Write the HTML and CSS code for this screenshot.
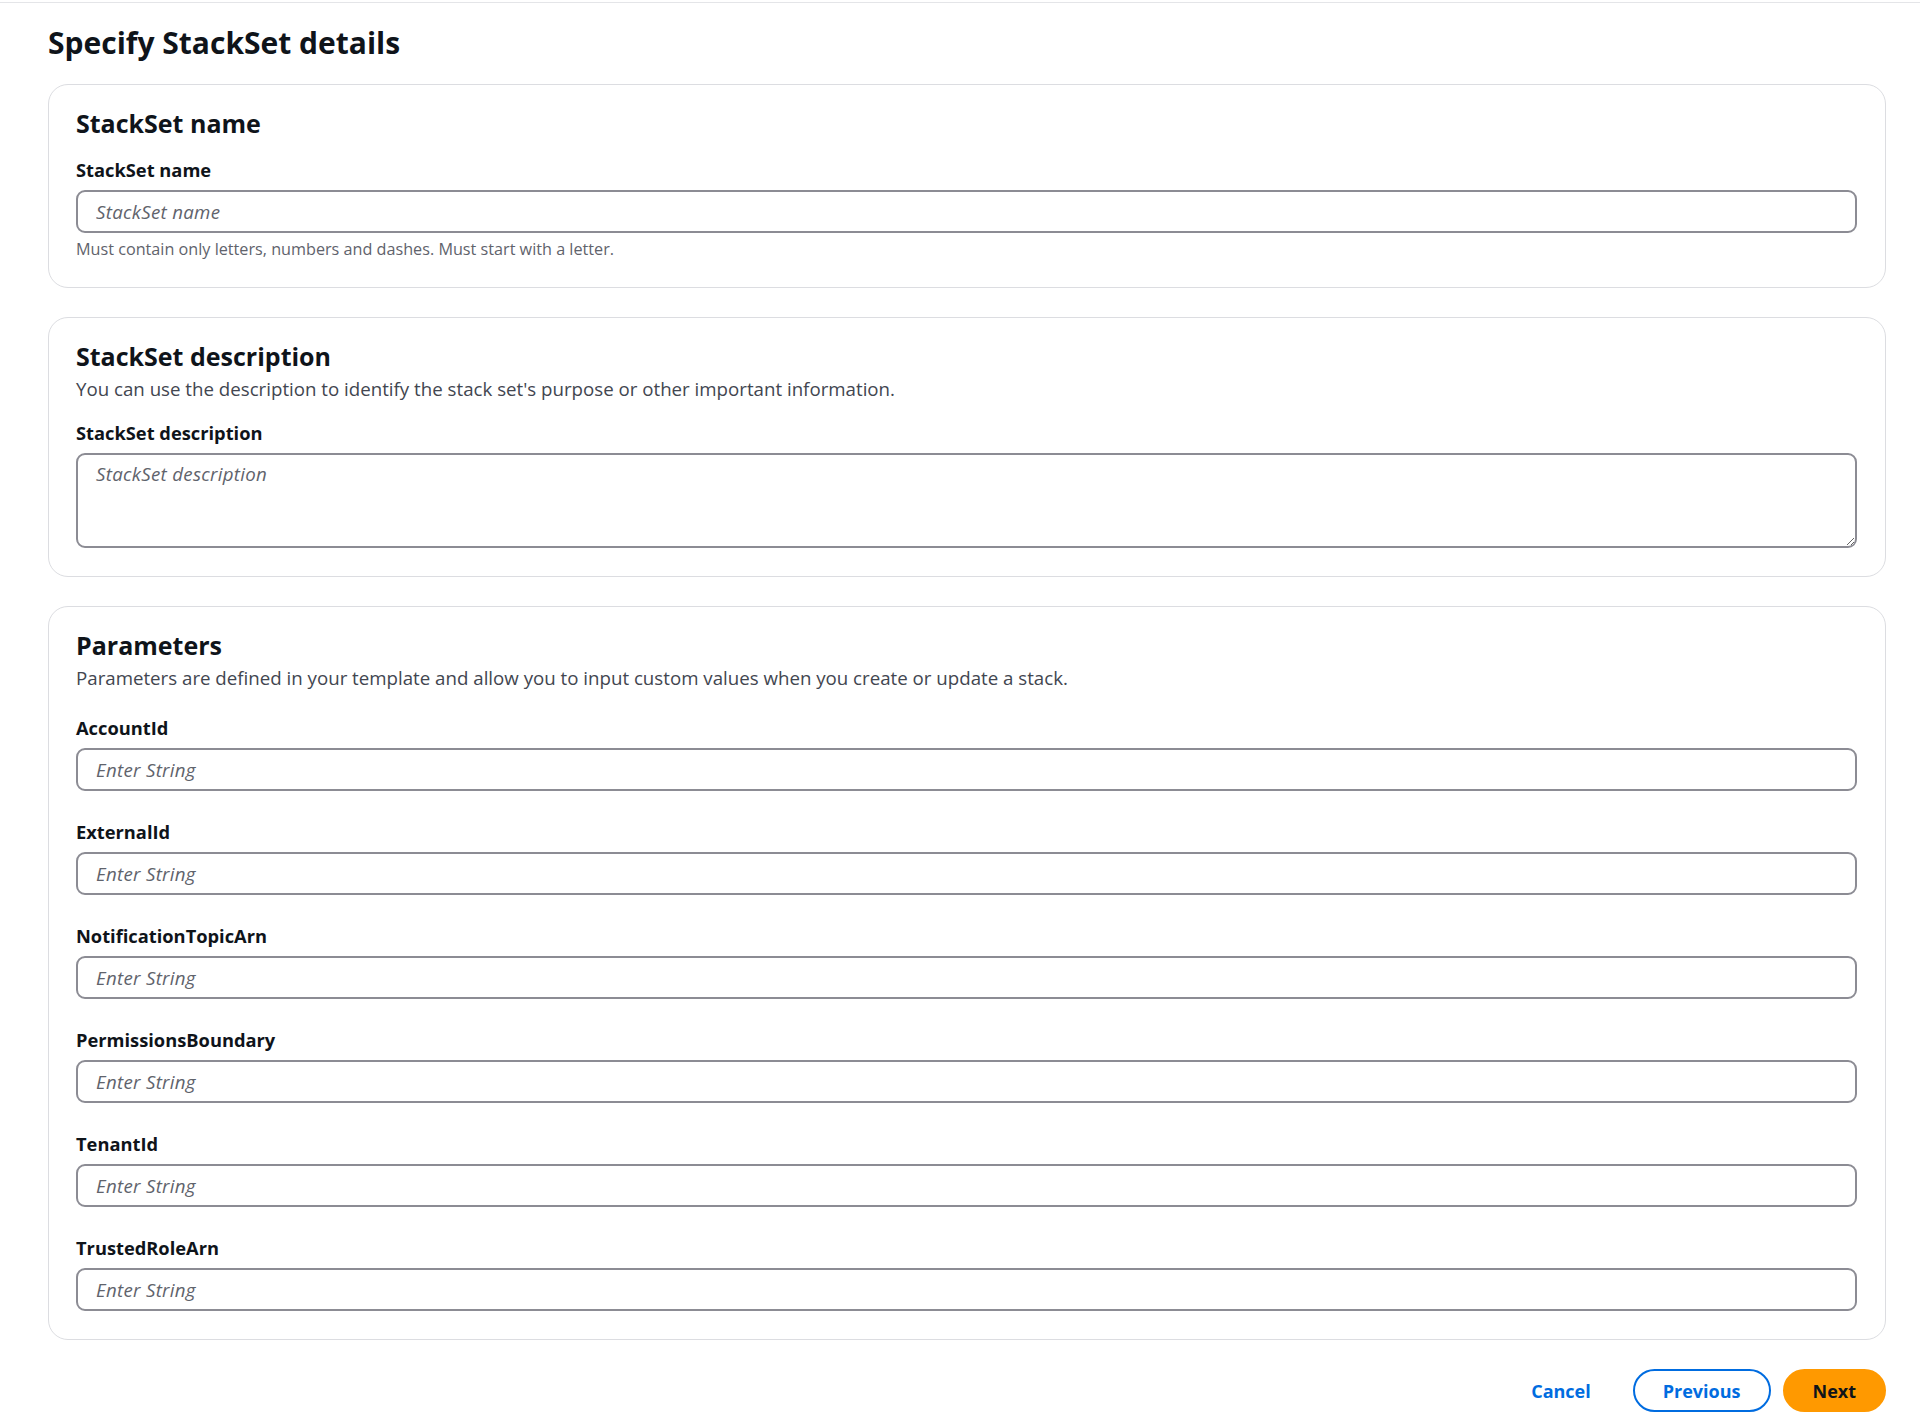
FILE: index.html
```html
<!DOCTYPE html>
<html lang="en">
  <head>
    <meta charset="UTF-8" />
    <meta name="viewport" content="width=device-width, initial-scale=1.0" />
    <title>Specify StackSet details</title>
    <link rel="stylesheet" href="styles.css">
  </head>
  <body>
    <div class="topline"></div>

    <main class="page">
      <h1 class="page-title">Specify StackSet details</h1>

      <!-- Nombre -->
      <section class="card">
        <h2 class="card-title">StackSet name</h2>
        <div class="field field-first">
          <label class="field-label" for="stackset-name">StackSet name</label>
          <input id="stackset-name" class="text-input" type="text" placeholder="StackSet name" />
          <p class="field-hint">Must contain only letters, numbers and dashes. Must start with a letter.</p>
        </div>
      </section>

      <!-- Descripcion -->
      <section class="card">
        <h2 class="card-title">StackSet description</h2>
        <p class="card-desc">You can use the description to identify the stack set's purpose or other important information.</p>
        <div class="field field-after-desc">
          <label class="field-label" for="stackset-desc">StackSet description</label>
          <textarea id="stackset-desc" class="text-area" placeholder="StackSet description"></textarea>
        </div>
      </section>

      <!-- Parametros -->
      <section class="card">
        <h2 class="card-title">Parameters</h2>
        <p class="card-desc">Parameters are defined in your template and allow you to input custom values when you create or update a stack.</p>
        <div class="param-list">
          <div class="field">
            <label class="field-label" for="p-account">AccountId</label>
            <input id="p-account" class="text-input" type="text" placeholder="Enter String" />
          </div>
          <div class="field">
            <label class="field-label" for="p-external">ExternalId</label>
            <input id="p-external" class="text-input" type="text" placeholder="Enter String" />
          </div>
          <div class="field">
            <label class="field-label" for="p-topic">NotificationTopicArn</label>
            <input id="p-topic" class="text-input" type="text" placeholder="Enter String" />
          </div>
          <div class="field">
            <label class="field-label" for="p-boundary">PermissionsBoundary</label>
            <input id="p-boundary" class="text-input" type="text" placeholder="Enter String" />
          </div>
          <div class="field">
            <label class="field-label" for="p-tenant">TenantId</label>
            <input id="p-tenant" class="text-input" type="text" placeholder="Enter String" />
          </div>
          <div class="field">
            <label class="field-label" for="p-role">TrustedRoleArn</label>
            <input id="p-role" class="text-input" type="text" placeholder="Enter String" />
          </div>
        </div>
      </section>

      <div class="actions">
        <button class="btn btn-link">Cancel</button>
        <button class="btn btn-normal">Previous</button>
        <button class="btn btn-primary">Next</button>
      </div>
    </main>
  </body>
</html>
```

FILE: styles.css
```css
body {
  margin: 0;
  font-family: "Open Sans", Arial, sans-serif;
  color: #0f141a;
  background-color: #ffffff;
}

.topline {
  height: 2px;
  border-bottom: 1px solid #e4e5e8;
}

.page {
  padding: 0 34px 0 48px;
}

.page-title {
  margin: 22px 0 23px 0;
  font-size: 30px;
  line-height: 36px;
  font-weight: 700;
}

.card {
  border: 1px solid #dcdde1;
  border-radius: 20px;
  padding: 23px 28px 28px 27px;
  margin-bottom: 29px;
}

.card-title {
  margin: 0;
  font-size: 25px;
  line-height: 30px;
  font-weight: 700;
}

.card-desc {
  margin: 7px 0 0 0;
  font-size: 18.7px;
  line-height: 22px;
  color: #424650;
}

.field {
  display: flex;
  flex-direction: column;
}

.field-first {
  margin-top: 21px;
}

.field-after-desc {
  margin-top: 22px;
}

.param-list {
  display: flex;
  flex-direction: column;
  gap: 30px;
  margin-top: 28px;
}

.field-label {
  font-size: 18.3px;
  line-height: 22px;
  font-weight: 700;
  margin-bottom: 9px;
}

.text-input,
.text-area {
  box-sizing: border-box;
  width: 100%;
  border: 2px solid #8c8c94;
  border-radius: 9px;
  padding: 8px 18px;
  font-family: inherit;
  font-size: 18.7px;
  line-height: 22px;
  color: #0f141a;
  outline: none;
}

.text-input {
  height: 43px;
}

.text-area {
  height: 95px;
  resize: vertical;
  display: block;
}

.text-input::placeholder,
.text-area::placeholder {
  color: #5f636c;
  font-style: italic;
  letter-spacing: 0.3px;
}

.field-hint {
  margin: 6px 0 0 0;
  font-size: 16.2px;
  line-height: 20px;
  color: #5f636c;
}

.actions {
  display: flex;
  justify-content: flex-end;
  gap: 12px;
}

.btn {
  box-sizing: border-box;
  height: 43px;
  padding: 0 28px;
  border: 2px solid transparent;
  border-radius: 22px;
  font-family: inherit;
  font-size: 18px;
  font-weight: 700;
  background: none;
  cursor: pointer;
}

.btn-link {
  color: #006ce0;
}

.btn-normal {
  color: #006ce0;
  border-color: #006ce0;
}

.btn-primary {
  background-color: #ff9900;
  border-color: #ff9900;
  color: #0f141a;
}
```
